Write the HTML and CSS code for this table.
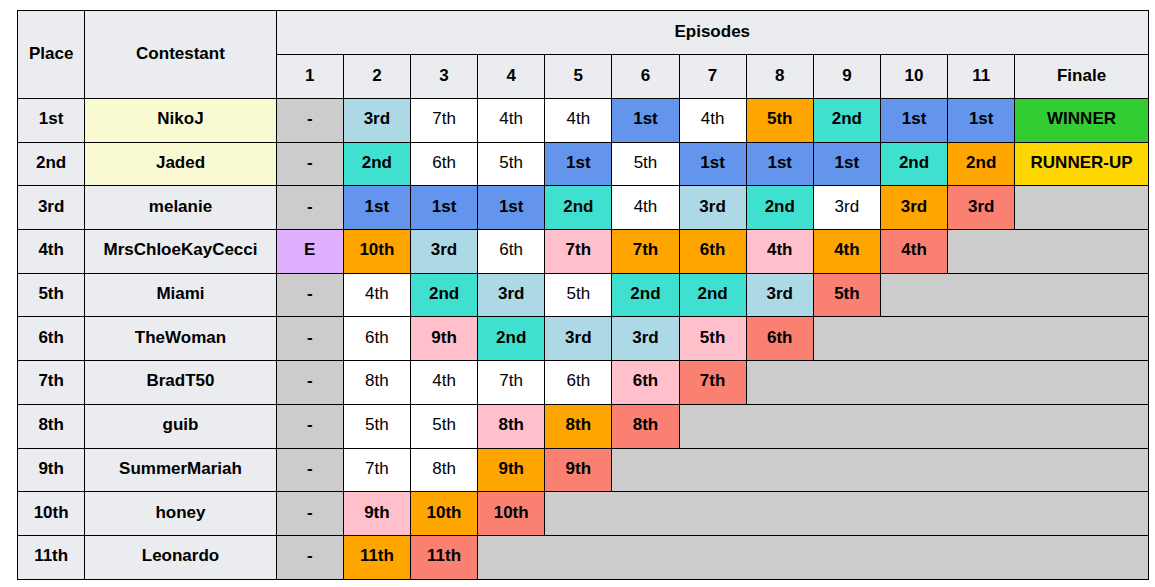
FILE: index.html
```html
<!DOCTYPE html>
<html>
<head>
<meta charset="utf-8">
<link rel="stylesheet" href="styles.css">
</head>
<body>
<table class="results">
  <colgroup>
    <col class="c-place"><col class="c-name">
    <col class="c-ep"><col class="c-ep"><col class="c-ep"><col class="c-ep"><col class="c-ep"><col class="c-ep"><col class="c-ep"><col class="c-ep"><col class="c-ep"><col class="c-ep"><col class="c-ep">
    <col class="c-fin">
  </colgroup>
  <thead>
    <tr class="hrow">
      <th rowspan="2">Place</th>
      <th rowspan="2">Contestant</th>
      <th colspan="12">Episodes</th>
    </tr>
    <tr class="hrow">
      <th>1</th><th>2</th><th>3</th><th>4</th><th>5</th><th>6</th><th>7</th><th>8</th><th>9</th><th>10</th><th>11</th><th>Finale</th>
    </tr>
  </thead>
  <tbody>
    <tr>
      <th>1st</th><th class="top">NikoJ</th>
      <td class="na">-</td><td class="lb">3rd</td><td class="w">7th</td><td class="w">4th</td><td class="w">4th</td><td class="cb">1st</td><td class="w">4th</td><td class="or">5th</td><td class="tq">2nd</td><td class="cb">1st</td><td class="cb">1st</td><td class="win">WINNER</td>
    </tr>
    <tr>
      <th>2nd</th><th class="top">Jaded</th>
      <td class="na">-</td><td class="tq">2nd</td><td class="w">6th</td><td class="w">5th</td><td class="cb">1st</td><td class="w">5th</td><td class="cb">1st</td><td class="cb">1st</td><td class="cb">1st</td><td class="tq">2nd</td><td class="or">2nd</td><td class="run">RUNNER-UP</td>
    </tr>
    <tr>
      <th>3rd</th><th>melanie</th>
      <td class="na">-</td><td class="cb">1st</td><td class="cb">1st</td><td class="cb">1st</td><td class="tq">2nd</td><td class="w">4th</td><td class="lb">3rd</td><td class="tq">2nd</td><td class="w">3rd</td><td class="or">3rd</td><td class="sa">3rd</td><td class="na"></td>
    </tr>
    <tr>
      <th>4th</th><th>MrsChloeKayCecci</th>
      <td class="ex">E</td><td class="or">10th</td><td class="lb">3rd</td><td class="w">6th</td><td class="pk">7th</td><td class="or">7th</td><td class="or">6th</td><td class="pk">4th</td><td class="or">4th</td><td class="sa">4th</td><td class="na" colspan="2"></td>
    </tr>
    <tr>
      <th>5th</th><th>Miami</th>
      <td class="na">-</td><td class="w">4th</td><td class="tq">2nd</td><td class="lb">3rd</td><td class="w">5th</td><td class="tq">2nd</td><td class="tq">2nd</td><td class="lb">3rd</td><td class="sa">5th</td><td class="na" colspan="3"></td>
    </tr>
    <tr>
      <th>6th</th><th>TheWoman</th>
      <td class="na">-</td><td class="w">6th</td><td class="pk">9th</td><td class="tq">2nd</td><td class="lb">3rd</td><td class="lb">3rd</td><td class="pk">5th</td><td class="sa">6th</td><td class="na" colspan="4"></td>
    </tr>
    <tr>
      <th>7th</th><th>BradT50</th>
      <td class="na">-</td><td class="w">8th</td><td class="w">4th</td><td class="w">7th</td><td class="w">6th</td><td class="pk">6th</td><td class="sa">7th</td><td class="na" colspan="5"></td>
    </tr>
    <tr>
      <th>8th</th><th>guib</th>
      <td class="na">-</td><td class="w">5th</td><td class="w">5th</td><td class="pk">8th</td><td class="or">8th</td><td class="sa">8th</td><td class="na" colspan="6"></td>
    </tr>
    <tr>
      <th>9th</th><th>SummerMariah</th>
      <td class="na">-</td><td class="w">7th</td><td class="w">8th</td><td class="or">9th</td><td class="sa">9th</td><td class="na" colspan="7"></td>
    </tr>
    <tr>
      <th>10th</th><th>honey</th>
      <td class="na">-</td><td class="pk">9th</td><td class="or">10th</td><td class="sa">10th</td><td class="na" colspan="8"></td>
    </tr>
    <tr>
      <th>11th</th><th>Leonardo</th>
      <td class="na">-</td><td class="or">11th</td><td class="sa">11th</td><td class="na" colspan="9"></td>
    </tr>
  </tbody>
</table>
</body>
</html>
```

FILE: styles.css
```css
html, body {
  margin: 0;
  padding: 0;
  background: #ffffff;
}
body {
  padding: 10px 0 0 17px;
  font-family: "Liberation Sans", Arial, sans-serif;
  font-size: 17px;
  color: #000;
}
.results {
  border-collapse: collapse;
  table-layout: fixed;
  width: 1131px;
  border: 1px solid #000;
}
.c-place { width: 67.3px; }
.c-name { width: 191.4px; }
.c-ep { width: 67.15px; }
.c-fin { width: 133.6px; }
.results th,
.results td {
  border: 1px solid #000;
  padding: 0 4px 2px;
  text-align: center;
  vertical-align: middle;
  line-height: 20px;
  white-space: nowrap;
}
.results th {
  background: #eaecf0;
  font-weight: bold;
}
.results td {
  font-weight: bold;
}
.hrow { height: 44px; }
.results tbody tr { height: 43.7px; }
.results th.top { background: #fafad2; }
.results td.w { background: #ffffff; font-weight: normal; }
.results td.na { background: #cccccc; }
.results td.lb { background: #add8e6; }
.results td.tq { background: #40e0d0; }
.results td.cb { background: #6495ed; }
.results td.or { background: #ffa500; }
.results td.pk { background: #ffc0cb; }
.results td.sa { background: #fa8072; }
.results td.ex { background: #e0b0ff; }
.results td.win { background: #32cd32; }
.results td.run { background: #ffd700; }
```
